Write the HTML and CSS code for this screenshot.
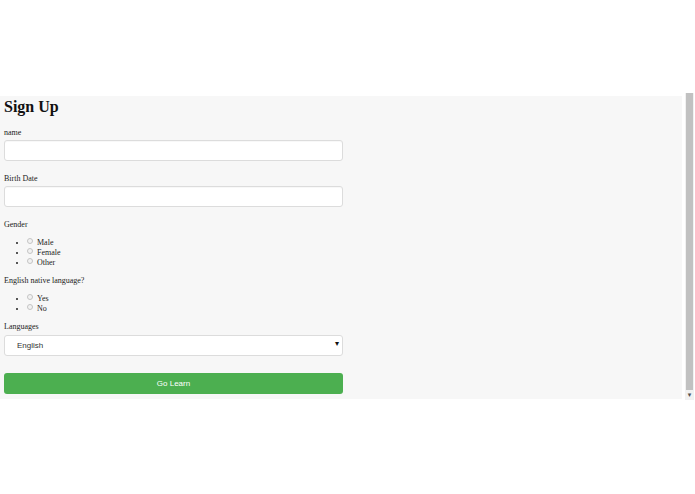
FILE: index.html
```html
<!DOCTYPE html>
<html lang="en">
<head>
<meta charset="utf-8">
<title>Sign Up</title>
<link rel="stylesheet" href="styles.css">
</head>
<body>
<div class="frame">
  <div class="panel">
    <h1 class="title">Sign Up</h1>
    <label class="label first">name</label>
    <input class="field" type="text">
    <label class="label">Birth Date</label>
    <input class="field" type="text">
    <label class="label">Gender</label>
    <ul class="options">
      <li><input class="radio" type="radio" name="g">Male</li>
      <li><input class="radio" type="radio" name="g">Female</li>
      <li><input class="radio" type="radio" name="g">Other</li>
    </ul>
    <label class="label tight">English native language?</label>
    <ul class="options">
      <li><input class="radio" type="radio" name="e">Yes</li>
      <li><input class="radio" type="radio" name="e">No</li>
    </ul>
    <label class="label tight">Languages</label>
    <div class="select-wrap">
      <select class="select"><option>English</option></select>
    </div>
    <button class="btn" type="button">Go Learn</button>
  </div>
  <div class="scrollbar">
    <div class="thumb"></div>
    <div class="arrow">&#9662;</div>
  </div>
</div>
</body>
</html>
```
FILE: styles.css
```css
html, body {
  margin: 0;
  padding: 0;
  background: #ffffff;
}
body {
  font-family: "Liberation Serif", "Times New Roman", serif;
  color: #222;
}
.frame {
  margin-top: 93px;
  height: 307px;
  display: flex;
  align-items: flex-start;
}
.panel {
  flex: 1;
  margin-top: 3px;
  margin-right: 3px;
  background: #f7f7f7;
  padding: 2px 0 5px 4px;
  display: flex;
  flex-direction: column;
  align-items: flex-start;
}
.title {
  margin: 0;
  font-size: 16px;
  line-height: 18px;
  font-weight: bold;
  color: #111;
}
.label {
  display: block;
  font-size: 8px;
  line-height: 10px;
  padding-top: 1px;
  margin-top: 12px;
  margin-bottom: 2px;
}
.label.first {
  margin-top: 11px;
}
.label.tight {
  margin-top: 7px;
}
.field {
  box-sizing: border-box;
  width: 339px;
  height: 21px;
  margin: 0;
  border: 1px solid #dcdcdc;
  border-radius: 3px;
  background: #fff;
  box-shadow: inset 0 1px 1px rgba(0,0,0,0.03);
}
.options {
  margin: 6px 0 0 0;
  padding: 0 0 0 23px;
  font-size: 8px;
  line-height: 10px;
  list-style: disc;
}
.radio {
  appearance: none;
  -webkit-appearance: none;
  box-sizing: border-box;
  width: 6px;
  height: 6px;
  margin: 0 4px 0 0;
  border: 1px solid #c4c4c4;
  border-radius: 50%;
  background: #f2f2f2;
  vertical-align: 1px;
}
.select-wrap {
  position: relative;
  width: 339px;
  height: 21px;
}
.select {
  appearance: none;
  -webkit-appearance: none;
  box-sizing: border-box;
  width: 339px;
  height: 21px;
  margin: 0;
  padding: 0 0 0 12px;
  border: 1px solid #dcdcdc;
  border-radius: 3px;
  background: #fff;
  font-family: "Liberation Sans", Arial, sans-serif;
  font-size: 8px;
  color: #333;
}
.select-wrap::after {
  content: "\25BE";
  position: absolute;
  right: 4px;
  top: 5px;
  font-family: "DejaVu Sans", sans-serif;
  font-size: 8px;
  line-height: 10px;
  color: #111;
  pointer-events: none;
}
.btn {
  margin-top: 18px;
  width: 339px;
  height: 21px;
  border: none;
  border-radius: 3px;
  background: #4caf50;
  color: #fff;
  font-family: "Liberation Sans", Arial, sans-serif;
  font-size: 8px;
  padding: 0;
}
.scrollbar {
  width: 9px;
  height: 307px;
  margin-right: 1px;
  background: #f1f1f1;
  display: flex;
  flex-direction: column;
  align-items: center;
}
.thumb {
  width: 7px;
  height: 297px;
  background: #c1c1c1;
}
.arrow {
  font-family: "DejaVu Sans", sans-serif;
  font-size: 7px;
  line-height: 10px;
  color: #505050;
}
```
